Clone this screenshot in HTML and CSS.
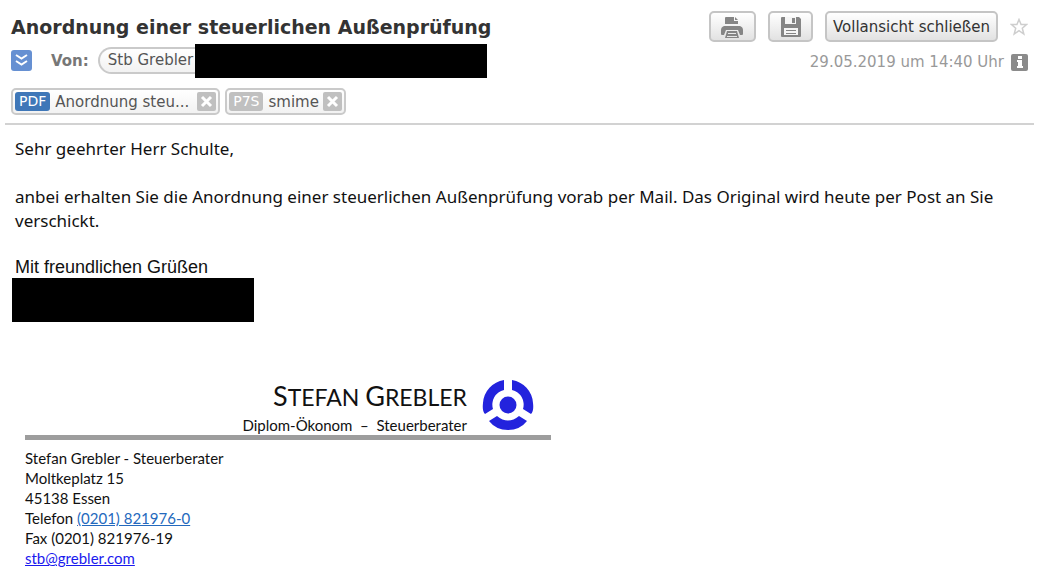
FILE: index.html
```html
<!DOCTYPE html>
<html lang="de">
<head>
<meta charset="utf-8">
<meta name="viewport" content="width=device-width, initial-scale=1">
<title>Anordnung einer steuerlichen Außenprüfung</title>
<link rel="stylesheet" href="styles.css">
</head>
<body>
<header class="mail-header">
  <div class="header-row">
    <h1 class="subject">Anordnung einer steuerlichen Außenprüfung</h1>
    <div class="actions">
      <button class="button icon-button" type="button" aria-label="Drucken">
        <svg width="24" height="24" viewBox="0 0 24 24" fill="#858585"><path d="M6 2h8v4h4v3H5V3q0-1 1-1z"/><path d="M15 2l3 3h-3z"/><path d="M4 11h16q3 1 3 4v4q0 1-1 1h-2l-2-5H6l-2 5H2q-1 0-1-1v-4q0-3 3-4z"/><path fill-rule="evenodd" d="M7 16h10l2 7H5zM8 18v1h8v-1zm-1 3v1h10v-1z"/></svg>
      </button>
      <button class="button icon-button save" type="button" aria-label="Speichern">
        <svg width="24" height="24" viewBox="0 0 24 24"><path fill="#858585" d="M3 2h17l2 2v17q0 1-1 1H3q-1 0-1-1V3q0-1 1-1z"/><path fill="#f5f5f5" d="M6 2h11v7H6zM5 13h14v7H5z"/><path fill="#858585" d="M13 3h3v5h-3zM7 15h10v1H7zM7 18h10v1H7z"/></svg>
      </button>
      <button class="button" type="button">Vollansicht schließen</button>
      <button class="bare" type="button" aria-label="Markieren">
        <svg width="18" height="18" viewBox="0 0 18 18"><path d="M9 1.500l2.100 5h5.400l-4.200 3.700 1.500 5.800L9 12.600 4.200 16l1.500-5.800L1.500 6.500h5.400z" fill="#fff" stroke="#cecece" stroke-width="1.500"/></svg>
      </button>
    </div>
  </div>
  <div class="header-row sender-row">
    <div class="sender">
      <button class="expand" type="button" aria-label="Details anzeigen">
        <svg width="21" height="21" viewBox="0 0 21 21" fill="none" stroke="#fff" stroke-width="2"><path d="M5 5l5.500 3.500L16 5M5 11l5.500 3.500L16 11"/></svg>
      </button>
      <span class="from-label">Von:</span>
      <span class="from-pill">Stb Grebler</span><span class="redacted sender-address"></span>
    </div>
    <div class="date">
      <time datetime="2019-05-29T14:40">29.05.2019 um 14:40 Uhr</time>
      <button class="bare" type="button" aria-label="Information">
        <svg width="17" height="17" viewBox="0 0 17 17"><rect width="17" height="17" rx="2" fill="#8b8b8b"/><path fill="#fff" d="M7 2h4v3H7zM6 6h5v6h1v2H6v-2h1V8H6z"/></svg>
      </button>
    </div>
  </div>
  <div class="attachments">
    <div class="attachment">
      <span class="type pdf">PDF</span><span class="file-name">Anordnung steu...</span>
      <button class="remove" type="button" aria-label="Anordnung schließen"><svg width="19" height="19" viewBox="0 0 19 19"><path d="M5 5l9 9M14 5l-9 9" stroke="#fff" stroke-width="3"/></svg></button>
    </div>
    <div class="attachment">
      <span class="type">P7S</span><span class="file-name short">smime</span>
      <button class="remove" type="button" aria-label="smime schließen"><svg width="19" height="19" viewBox="0 0 19 19"><path d="M5 5l9 9M14 5l-9 9" stroke="#fff" stroke-width="3"/></svg></button>
    </div>
  </div>
</header>
<main class="message">
  <p>Sehr geehrter Herr Schulte,</p>
  <p>anbei erhalten Sie die Anordnung einer steuerlichen Außenprüfung vorab per Mail. Das Original wird heute per Post an Sie verschickt.</p>
  <p class="closing">Mit freundlichen Grüßen</p>
  <div class="redacted signer"></div>
  <section class="signature">
    <div class="brand">
      <div class="brand-text">
        <div class="brand-name"><span class="initial">S</span>TEFAN <span class="initial">G</span>REBLER</div>
        <div class="brand-role">Diplom-Ökonom &nbsp;–&nbsp; Steuerberater</div>
      </div>
      <svg class="logo" width="52" height="52" viewBox="0 0 52 52" fill="#2323dd"><circle cx="26" cy="26" r="8.500"/><path d="M22 1v10A15 15 0 0 0 11 30L3 35Q0 32 1 24A25 25 0 0 1 22 1zM30 1v10A15 15 0 0 1 41 30L49 35Q52 32 51 24A25 25 0 0 0 30 1zM7 42l8-5Q26 46 37 37l8 5Q38 51 26 51T7 42z"/></svg>
    </div>
    <address class="contact">
      Stefan Grebler - Steuerberater<br>
      Moltkeplatz 15<br>
      45138 Essen<br>
      Telefon <a class="phone" href="tel:+492018219760">(0201) 821976-0</a><br>
      Fax (0201) 821976-19<br>
      <a href="mailto:stb@grebler.com">stb@grebler.com</a>
    </address>
  </section>
</main>
</body>
</html>
```
FILE: styles.css
```css
* { box-sizing: border-box; }

body {
  margin: 0;
  background: #fff;
  color: #111;
  font-family: "DejaVu Sans", Verdana, sans-serif;
  font-size: 15px;
}

button { font: inherit; cursor: pointer; }
svg { display: block; }

.mail-header {
  margin: 0 5px;
  padding: 11px 6px 8px;
  border-bottom: 2px solid #d2d2d2;
}

.header-row {
  display: flex;
  justify-content: space-between;
  align-items: center;
}

.subject { margin: 0; font-size: 19px; line-height: 24px; color: #333; }

.actions { display: flex; align-items: center; gap: 12px; }

.button {
  height: 31px;
  padding: 0 6px;
  border: 2px solid #c5c5c5;
  border-radius: 5px;
  background: linear-gradient(#fff, #e2e2e2);
  color: #333;
  white-space: nowrap;
}

.icon-button { width: 47px; padding: 0 9px; }
.save { width: 45px; }

.bare { padding: 0; border: 0; background: none; }

.sender-row { align-items: flex-start; }

.sender { display: flex; align-items: center; height: 37px; }

.expand {
  width: 21px;
  height: 21px;
  padding: 0;
  border: 0;
  border-radius: 3px;
  background: #6690d2;
}

.from-label { margin: 0 9px 0 19px; font-weight: bold; color: #777; }

.from-pill {
  height: 27px;
  padding: 0 2px 0 8px;
  border: 2px solid #cacaca;
  border-right: 0;
  border-radius: 14px 0 0 14px;
  background: linear-gradient(#fff, #f2f2f2);
  line-height: 23px;
  color: #555;
}

.redacted { background: #000; }
.sender-address { width: 292px; height: 34px; }

.date {
  display: flex;
  align-items: center;
  gap: 7px;
  padding-top: 11px;
  color: #999;
}

.attachments { display: flex; gap: 5px; padding-top: 9px; }

.attachment {
  display: flex;
  align-items: center;
  height: 27px;
  padding: 0 2px;
  border: 2px solid #cacaca;
  border-radius: 5px;
  background: linear-gradient(#fff, #f2f2f2);
  color: #555;
}

.type {
  padding: 0 4px;
  border-radius: 3px;
  background: #c0c0c0;
  color: #fff;
  font-size: 14px;
  line-height: 19px;
}

.pdf { background: #3f77b8; }

.file-name { margin: 0 8px 0 5px; }
.short { margin-right: 4px; }

.remove {
  padding: 0;
  border: 0;
  border-radius: 2px;
  background: #c0c0c0;
}

.message {
  padding: 12px 12px 8px;
  font-family: "Noto Sans", "Open Sans", sans-serif;
  font-size: 17px;
  line-height: 24px;
}

.message p { margin: 0 3px 24px; }

.message .closing {
  margin-bottom: 0;
  font-family: "Liberation Sans", Arial, sans-serif;
  font-size: 18px;
  line-height: 21px;
}

.signer { max-width: 242px; height: 44px; }

.signature {
  max-width: 526px;
  margin: 56px 0 0 13px;
  font-family: Lato, "Noto Sans", sans-serif;
}

.brand {
  display: flex;
  justify-content: flex-end;
  gap: 15px;
  padding-right: 17px;
  border-bottom: 5px solid #9d9d9d;
}

.brand-text { text-align: right; }
.brand-name { font-size: 23px; line-height: 36px; }
.initial { font-size: 27px; }
.brand-role { font-size: 15px; line-height: 20px; }
.logo { margin-top: 1px; }

.contact {
  margin-top: 8px;
  font-size: 15px;
  font-style: normal;
  line-height: 20px;
}

.contact a { color: #1a1aee; }
.contact .phone { color: #2469bd; }
```
